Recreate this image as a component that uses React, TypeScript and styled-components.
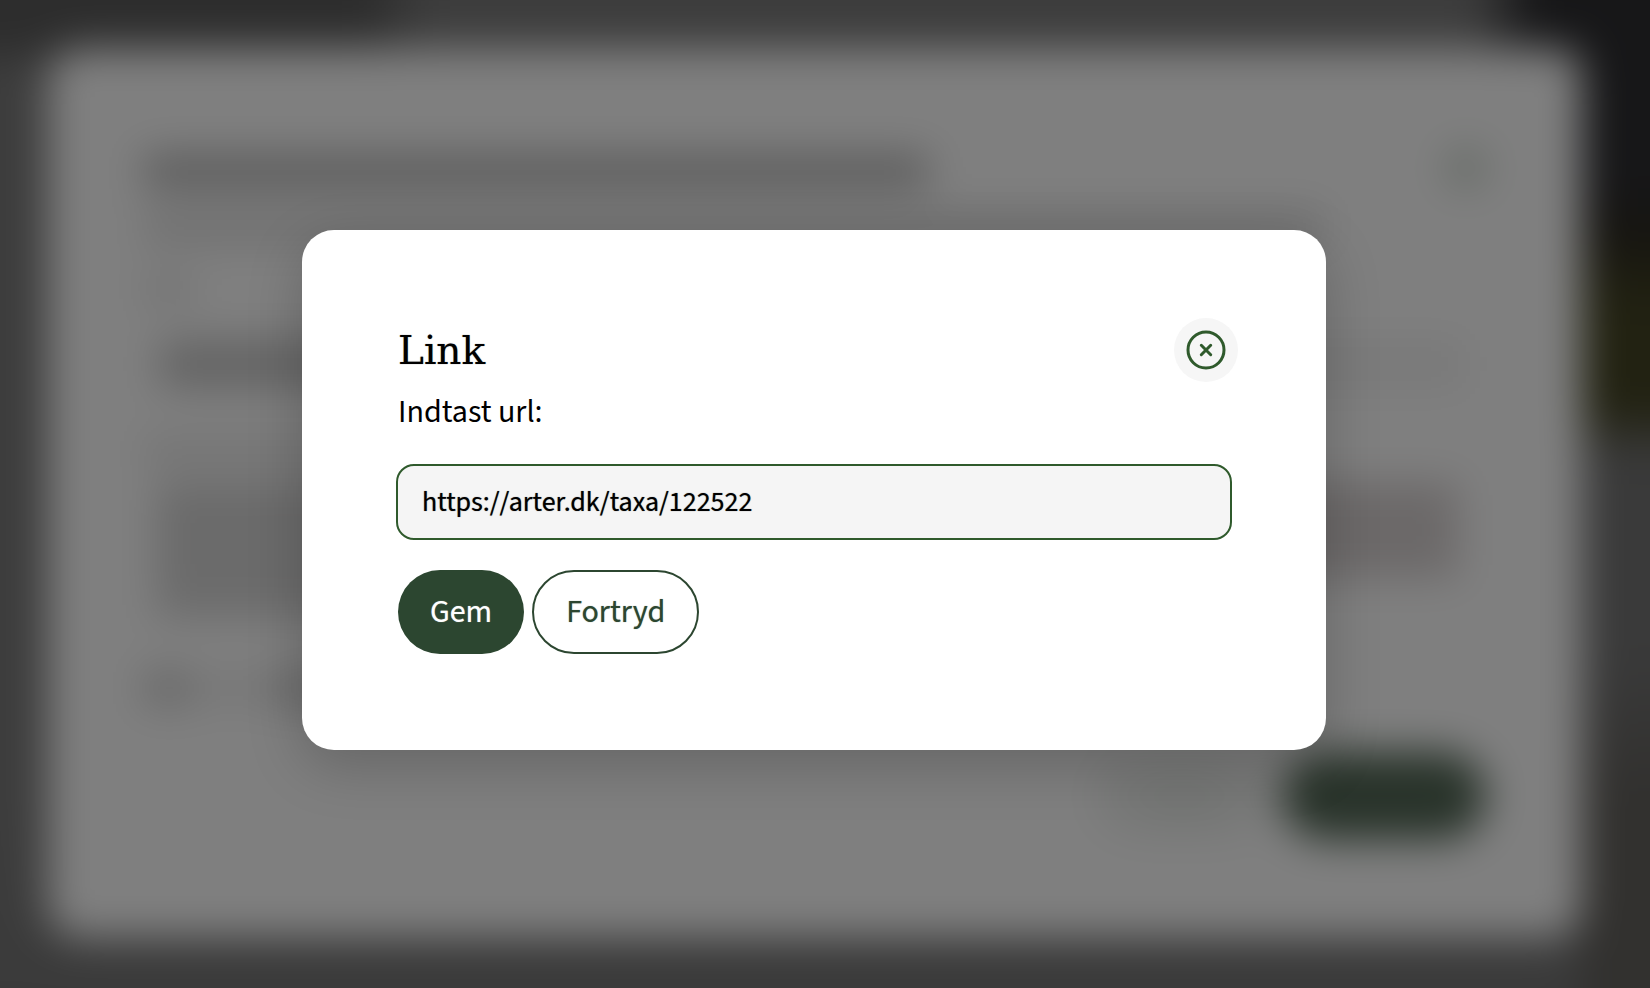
import React from "react";
import styled, { createGlobalStyle, css } from "styled-components";

const sans = `"Source Sans 3", "Source Sans Pro", "Noto Sans CJK SC", "Open Sans", sans-serif`;
const slab = `"Roboto Slab", "DejaVu Serif", serif`;
const green = "#2c4630";
const leaf = "#2f5a2c";

const GlobalStyle = createGlobalStyle`
  *, *::before, *::after { box-sizing: border-box; }
  body { margin: 0; background: #3d3d3d; font-family: ${sans}; color: #000; }
`;

const Page = styled.div`
  position: relative;
  min-height: 100vh;
  display: grid;
  overflow: hidden;
`;

/* The page behind the dialog, out of focus. It bleeds 64px past the window
   on each side so that the blur does not fade at the edges. */
const Behind = styled.div`
  grid-area: 1 / 1;
  display: flex;
  margin: -64px;
  padding: 112px 132px 114px 112px;
  filter: blur(20px);
  background:
    linear-gradient(to right, #5a5a5a 430px, transparent 490px) 0 0 / 100% 118px no-repeat,
    linear-gradient(to bottom, #2e2e31 0 250px, #2c2922 290px, #444424 370px 470px, #747474 520px 720px, #64625e 860px) 100% 0 / 132px 100% no-repeat,
    linear-gradient(to left, #2e2e31 180px, transparent 240px) 0 0 / 100% 112px no-repeat,
    linear-gradient(to bottom, #7a7a7a 0 860px, #747474 100%);
`;

const Sheet = styled.div`
  flex: 1;
  display: flex;
  flex-direction: column;
  padding: 98px 96px 98px;
  border-radius: 32px;
  background: #fff;
`;

const SheetHead = styled.div`
  display: flex;
  justify-content: space-between;
  align-items: flex-end;
`;

const Strip = styled.div<{ $w: string; $h: number; $tone: string; $gap?: number }>`
  width: ${(p) => p.$w};
  height: ${(p) => p.$h}px;
  margin-top: ${(p) => p.$gap ?? 0}px;
  background: ${(p) => p.$tone};
`;

const SheetClose = styled.div`
  width: 40px;
  height: 40px;
  border: 6px solid #bccabc;
  border-radius: 50%;
  background: #d6ddd6;
`;

const SheetFoot = styled.div`
  display: flex;
  justify-content: flex-end;
  gap: 8px;
  margin-top: auto;
`;

const SheetButton = styled.div<{ $solid?: boolean }>`
  width: ${(p) => (p.$solid ? 204 : 184)}px;
  height: 88px;
  border-radius: 44px;
  background: ${(p) =>
    p.$solid
      ? "#526755"
      : "radial-gradient(closest-side, #e2e6e2, #f4f5f4)"};
`;

const Overlay = styled.div`
  grid-area: 1 / 1;
  z-index: 1;
  display: flex;
  align-items: center;
  justify-content: center;
  padding: 0 22px 8px 0;
  background: rgba(0, 0, 0, 0.5);
`;

const Dialog = styled.section`
  width: 1024px;
  max-width: 90%;
  padding: 88px 88px 96px 96px;
  border-radius: 32px;
  background: #fff;
  box-shadow: 0 16px 56px rgba(0, 0, 0, 0.2);
`;

const Header = styled.header`
  display: flex;
  align-items: center;
  justify-content: space-between;
`;

/* Headings and controls carry slightly heavier text than the running copy. */
const sturdyText = css`
  text-shadow: 0 0 1px color-mix(in srgb, currentColor 60%, transparent);
`;

const Title = styled.h2`
  margin: 0;
  padding-top: 2px;
  font: 400 39px/62px ${slab};
  ${sturdyText}
`;

const CloseButton = styled.button`
  display: grid;
  place-items: center;
  width: 64px;
  height: 64px;
  padding: 0;
  border: 0;
  border-radius: 50%;
  background: #f6f6f6;
  color: ${leaf};
`;

const Label = styled.label`
  display: block;
  margin: 8px 0 30px;
  font-size: 32px;
  line-height: 44px;
`;

const FieldRow = styled.div`
  display: flex;
  margin: 0 6px 30px -2px;
`;

const UrlInput = styled.input`
  flex: 1;
  min-width: 0;
  height: 76px;
  padding: 0 24px;
  border: 2px solid ${leaf};
  border-radius: 18px;
  outline: 0;
  background: #f5f5f5;
  color: #000;
  font: 400 28px/40px ${sans};
  ${sturdyText}
`;

const Actions = styled.div`
  display: flex;
  gap: 8px;
`;

const Button = styled.button<{ $primary?: boolean }>`
  height: 84px;
  padding: 0 32px;
  border: ${(p) => (p.$primary ? 0 : 2)}px solid ${green};
  border-radius: 42px;
  background: ${(p) => (p.$primary ? green : "#fff")};
  color: ${(p) => (p.$primary ? "#fff" : green)};
  font: 400 32px/40px ${sans};
  ${sturdyText}
`;

const CloseIcon = () => (
  <svg width="40" height="40" viewBox="0 0 40 40" fill="none" stroke="currentColor" strokeWidth="3" strokeLinecap="round" aria-hidden="true">
    <circle cx="20" cy="20" r="18" />
    <path d="M15.3 15.3l9.4 9.4M24.7 15.3l-9.4 9.4" />
  </svg>
);

export default function App() {
  return (
    <Page>
      <GlobalStyle />
      <Behind aria-hidden="true">
        <Sheet>
          <SheetHead>
            <Strip $w="784px" $h={34} $tone="#b8b8b8" $gap={8} />
            <SheetClose />
          </SheetHead>
          <Strip $w="1180px" $h={34} $tone="#e0e0e0" $gap={22} />
          <Strip $w="48px" $h={30} $tone="#e6e6e6" $gap={30} />
          <Strip $w="1320px" $h={48} $tone="linear-gradient(to right, #fff 16px, #c8c8c8 16px 700px, #f3f3f3 900px)" $gap={36} />
          <Strip $w="1100px" $h={30} $tone="#e8e8e8" $gap={48} />
          <Strip $w="1314px" $h={96} $tone="linear-gradient(to right, #fff 12px, #d6d6d6 12px, #d8d2d2)" $gap={16} />
          <Strip $w="1100px" $h={40} $tone="linear-gradient(to right, #fff 12px, #d8d8d8 12px)" />
          <Strip $w="1100px" $h={36} $tone="linear-gradient(to right, #d0d0d0 0 44px, #f0f0f0 44px 130px, #d4d4d4 130px)" $gap={52} />
          <SheetFoot>
            <SheetButton />
            <SheetButton $solid />
          </SheetFoot>
        </Sheet>
      </Behind>
      <Overlay>
        <Dialog role="dialog" aria-modal="true" aria-labelledby="dialog-title">
          <Header>
            <Title id="dialog-title">Link</Title>
            <CloseButton type="button" aria-label="Luk">
              <CloseIcon />
            </CloseButton>
          </Header>
          <Label htmlFor="url">Indtast url:</Label>
          <FieldRow>
            <UrlInput id="url" type="text" defaultValue="https://arter.dk/taxa/122522" />
          </FieldRow>
          <Actions>
            <Button type="button" $primary>Gem</Button>
            <Button type="button">Fortryd</Button>
          </Actions>
        </Dialog>
      </Overlay>
    </Page>
  );
}
